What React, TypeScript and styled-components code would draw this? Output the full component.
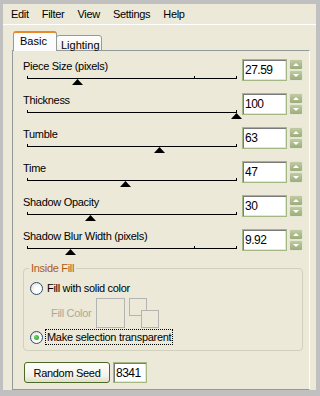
import styled, { createGlobalStyle } from 'styled-components';

const GlobalStyle = createGlobalStyle`
  html, body {
    margin: 0;
    padding: 0;
    background: #c0c0c0;
  }
  body {
    font-family: "Liberation Sans", Arial, sans-serif;
    font-size: 11px;
    letter-spacing: -0.3px;
    color: #000;
  }
`;

const Window = styled.div`
  margin: 4px 4px 0 3px;
  height: 386px;
  background: #ece9d8;
  display: flex;
  flex-direction: column;
`;

const MenuBar = styled.div`
  display: flex;
  height: 20px;
  padding-left: 2px;
  border-bottom: 1px solid #fff;
`;

const MenuItem = styled.span`
  padding: 0 6px;
  margin-right: 1px;
  line-height: 20px;
`;

const Body = styled.div`
  flex: 1;
  display: flex;
  flex-direction: column;
  padding: 6px 6px 0 9px;
`;

const TabStrip = styled.div`
  display: flex;
  align-items: flex-end;
  height: 20px;
  padding-left: 1px;
  margin-bottom: -1px;
  position: relative;
  z-index: 1;
`;

const Tab = styled.div<{ $active?: boolean; $w: number }>`
  box-sizing: border-box;
  width: ${(p) => p.$w}px;
  height: ${(p) => (p.$active ? 20 : 16)}px;
  padding-left: ${(p) => (p.$active ? 6 : 4)}px;
  border: 1px solid #919b9c;
  border-bottom: ${(p) => (p.$active ? 'none' : '1px solid #919b9c')};
  border-top: ${(p) => (p.$active ? '2px solid #e68b2c' : '1px solid #919b9c')};
  border-radius: 3px 3px 0 0;
  background: ${(p) => (p.$active ? '#fcfcfe' : 'linear-gradient(#ffffff, #f0efe8)')};
  line-height: ${(p) => (p.$active ? 16 : 18)}px;
  letter-spacing: 0;
  margin-left: ${(p) => (p.$active ? 0 : -1)}px;
`;

const Panel = styled.div`
  flex: 1;
  border: 1px solid #919b9c;
  border-right-color: #fdfdfd;
  background: #ece9d8;
  padding-top: 8px;
`;

const Row = styled.div`
  display: flex;
  height: 34px;
`;

const LeftCol = styled.div`
  width: 229px;
  padding-left: 10px;
  box-sizing: border-box;
`;

const Label = styled.div`
  height: 14px;
  line-height: 14px;
`;

const Slider = styled.div`
  position: relative;
  height: 20px;
  margin-left: 4px;
  width: 210px;
`;

const Track = styled.div`
  position: absolute;
  left: 0;
  right: 0;
  top: 5px;
  height: 1px;
  background: #000;
`;

const Tick = styled.div`
  position: absolute;
  top: 3px;
  width: 1px;
  height: 3px;
  background: #000;
`;

const Thumb = styled.svg`
  position: absolute;
  top: 6px;
  width: 11px;
  height: 6px;
`;

const NumBox = styled.input<{ $w?: number; $h?: number }>`
  box-sizing: border-box;
  width: ${(p) => p.$w ?? 45}px;
  height: ${(p) => p.$h ?? 22}px;
  margin: 0;
  padding: 0 0 0 2px;
  border: 1px solid #a5b785;
  box-shadow: inset 1px 1px 0 #7a7a7a, inset -1px -1px 0 #e4e4e4;
  background: #fff;
  font-family: "Liberation Sans", Arial, sans-serif;
  font-size: 12px;
  letter-spacing: -0.5px;
  color: #000;
  outline: none;
`;

const Spin = styled.div`
  display: flex;
  flex-direction: column;
  margin-left: 2px;
  width: 14px;
  height: 22px;
`;

const SpinButton = styled.div<{ $down?: boolean }>`
  box-sizing: border-box;
  height: 11px;
  border: 1px solid #e3e8d4;
  border-radius: 2px;
  background: linear-gradient(#c0cba2, #9dac7a);
  display: flex;
  align-items: center;
  justify-content: center;

  &::after {
    content: '';
    width: 0;
    height: 0;
    border-left: 3px solid transparent;
    border-right: 3px solid transparent;
    ${(p) => (p.$down ? 'border-top: 3px solid #fff;' : 'border-bottom: 3px solid #fff;')}
  }
`;

const Group = styled.fieldset`
  margin: 0 6px 0 10px;
  padding: 6px 0 5px 6px;
  border: 1px solid #d0d0bf;
  border-radius: 4px;
  min-width: 0;
`;

const Legend = styled.legend`
  padding: 0 2px;
  margin-left: -1px;
  line-height: 11px;
  color: #ab5a1c;
`;

const Option = styled.div<{ $gap?: number }>`
  display: flex;
  align-items: center;
  height: 16px;
  margin-top: ${(p) => p.$gap ?? 0}px;
`;

const Radio = styled.span<{ $checked?: boolean }>`
  box-sizing: border-box;
  width: 13px;
  height: 13px;
  border-radius: 50%;
  border: 1px solid #2c4f73;
  background: radial-gradient(circle at 65% 65%, #ffffff 30%, #dcd9cc 100%);
  margin-right: 2px;
  display: flex;
  align-items: center;
  justify-content: center;

  &::after {
    content: '';
    display: ${(p) => (p.$checked ? 'block' : 'none')};
    width: 5px;
    height: 5px;
    border-radius: 50%;
    background: radial-gradient(circle at 40% 40%, #6ed66e, #1f9a1f);
  }
`;

const OptionText = styled.span<{ $focus?: boolean }>`
  border: 1px dotted ${(p) => (p.$focus ? '#000' : 'transparent')};
  padding: 0 1px;
  line-height: 14px;
`;

const FillRow = styled.div`
  display: flex;
  align-items: center;
  height: 30px;
  margin-top: 2px;
  padding-left: 21px;
`;

const FillLabel = styled.span`
  width: 45px;
  color: #aca899;
`;

const ColorBox = styled.div`
  box-sizing: border-box;
  width: 29px;
  height: 30px;
  border: 1px solid #b4b4b4;
`;

const SwatchPair = styled.div`
  position: relative;
  width: 30px;
  height: 30px;
  margin-left: 4px;
`;

const Swatch = styled.div<{ $off: number }>`
  position: absolute;
  left: ${(p) => p.$off}px;
  top: ${(p) => p.$off}px;
  box-sizing: border-box;
  width: 18px;
  height: 18px;
  border: 1px solid #b4b4b4;
  background: #ece9d8;
`;

const BottomRow = styled.div`
  display: flex;
  gap: 3px;
  margin-top: 11px;
  padding-left: 11px;
`;

const Button = styled.button`
  box-sizing: border-box;
  width: 86px;
  height: 21px;
  margin: 0;
  padding: 0;
  border: 1px solid #4a6a27;
  border-radius: 3px;
  background: linear-gradient(#ffffff, #f3f1e6 70%, #e2ddc8);
  font-family: "Liberation Sans", Arial, sans-serif;
  font-size: 11px;
  letter-spacing: -0.3px;
  color: #000;
`;

type SliderRowProps = {
  label: string;
  value: string;
  frac: number;
  ticks?: number[];
};

function SliderRow({ label, value, frac, ticks = [] }: SliderRowProps) {
  const len = 209;
  return (
    <Row>
      <LeftCol>
        <Label>{label}</Label>
        <Slider>
          <Track />
          {[0, ...ticks, 1].map((t) => (
            <Tick key={t} style={{ left: Math.round(t * len) }} />
          ))}
          <Thumb viewBox="0 0 11 6" style={{ left: Math.round(frac * len) - 5 }}>
            <polygon points="5.5,0 11,6 0,6" fill="#000" />
          </Thumb>
        </Slider>
      </LeftCol>
      <NumBox readOnly value={value} />
      <Spin>
        <SpinButton />
        <SpinButton $down />
      </Spin>
    </Row>
  );
}

const sliders: SliderRowProps[] = [
  { label: 'Piece Size (pixels)', value: '27.59', frac: 0.239, ticks: [0.8] },
  { label: 'Thickness', value: '100', frac: 1 },
  { label: 'Tumble', value: '63', frac: 0.63 },
  { label: 'Time', value: '47', frac: 0.47 },
  { label: 'Shadow Opacity', value: '30', frac: 0.3 },
  { label: 'Shadow Blur Width (pixels)', value: '9.92', frac: 0.206, ticks: [0.8] },
];

export default function App() {
  return (
    <>
      <GlobalStyle />
      <Window>
        <MenuBar>
          {['Edit', 'Filter', 'View', 'Settings', 'Help'].map((m) => (
            <MenuItem key={m}>{m}</MenuItem>
          ))}
        </MenuBar>
        <Body>
          <TabStrip>
            <Tab $active $w={44}>Basic</Tab>
            <Tab $w={46}>Lighting</Tab>
          </TabStrip>
          <Panel>
            {sliders.map((s) => (
              <SliderRow key={s.label} {...s} />
            ))}
            <Group>
              <Legend>Inside Fill</Legend>
              <Option>
                <Radio />
                <OptionText>Fill with solid color</OptionText>
              </Option>
              <FillRow>
                <FillLabel>Fill Color</FillLabel>
                <ColorBox />
                <SwatchPair>
                  <Swatch $off={0} />
                  <Swatch $off={12} />
                </SwatchPair>
              </FillRow>
              <Option $gap={1}>
                <Radio $checked />
                <OptionText $focus>Make selection transparent</OptionText>
              </Option>
            </Group>
            <BottomRow>
              <Button>Random Seed</Button>
              <NumBox readOnly value="8341" $w={34} $h={21} />
            </BottomRow>
          </Panel>
        </Body>
      </Window>
    </>
  );
}
